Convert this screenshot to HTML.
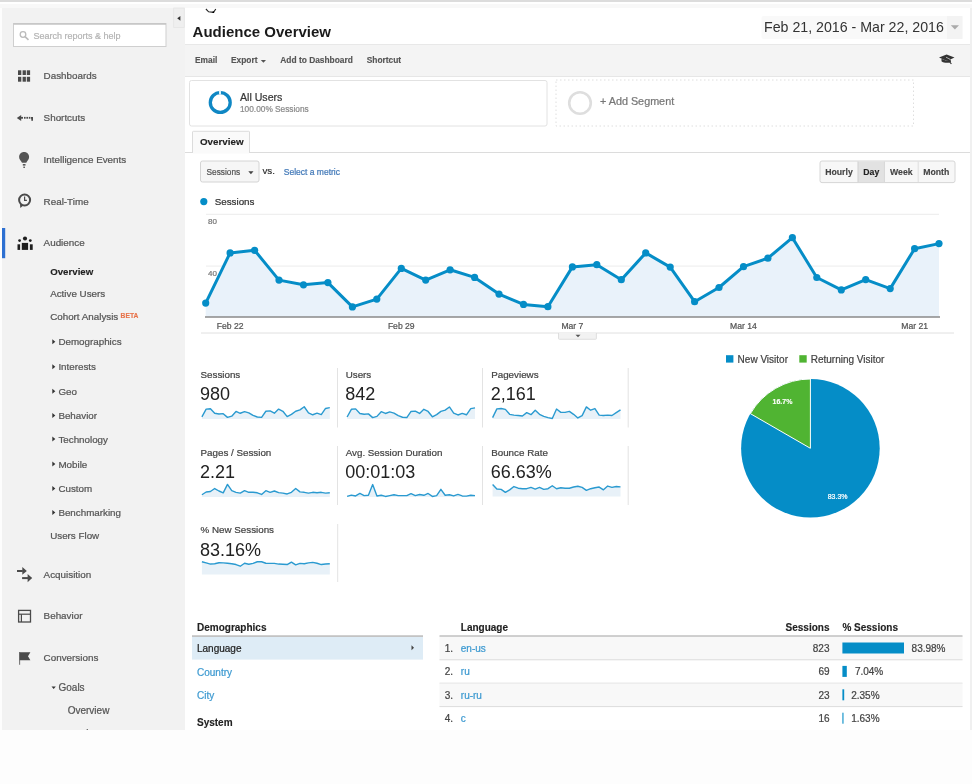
<!DOCTYPE html>
<html><head><meta charset="utf-8"><title>Audience Overview</title>
<style>
html,body{margin:0;padding:0;background:#fdfdfd;overflow:hidden;}
svg{display:block;filter:blur(0.35px);font-family:"Liberation Sans",sans-serif;}
</style></head><body>
<svg width="972" height="784" viewBox="0 0 972 784">
<rect x="0" y="0" width="972" height="784" fill="#fdfdfd" />
<rect x="0" y="0" width="972" height="2" fill="#dcdcdc" />
<rect x="0" y="2" width="972" height="2" fill="#ffffff" />
<rect x="0" y="4" width="972" height="4" fill="#f8f8f8" />
<rect x="2" y="8" width="183" height="722" fill="#f2f2f2" />
<rect x="185" y="8" width="785" height="722" fill="#ffffff" />
<rect x="970" y="8" width="2" height="722" fill="#f0f0f0" />
<rect x="185" y="44.5" width="785" height="32.5" fill="#f4f4f4" />
<line x1="185" y1="44.5" x2="970" y2="44.5" stroke="#e8e8e8" stroke-width="1" />
<line x1="185" y1="76.5" x2="970" y2="76.5" stroke="#e6e6e6" stroke-width="1" />
<rect x="13.5" y="23.5" width="152.5" height="23" fill="#fff" stroke="#cfcfcf" stroke-width="1"/>
<line x1="13.5" y1="24" x2="166" y2="24" stroke="#c4c4c4" stroke-width="1.5" />
<circle cx="23" cy="34.5" r="2.8" fill="none" stroke="#bbb" stroke-width="1.3"/>
<line x1="25" y1="36.6" x2="28.5" y2="39.8" stroke="#bbb" stroke-width="1.6" />
<text x="33.5" y="38.6" font-size="9" font-weight="400" fill="#b4b4b4" text-anchor="start"  stroke="#b4b4b4" stroke-width="0.22">Search reports &amp; help</text>
<rect x="173.7" y="8" width="10.5" height="19.5" fill="#efefef" stroke="#e4e4e4" stroke-width="0.8"/>
<path d="M180.4,16 L177.2,18.35 L180.4,20.7 Z" fill="#333"/>
<text x="43.6" y="79" font-size="9.85" font-weight="400" fill="#555" text-anchor="start"  stroke="#555" stroke-width="0.22">Dashboards</text>
<text x="43.6" y="121" font-size="9.85" font-weight="400" fill="#555" text-anchor="start"  stroke="#555" stroke-width="0.22">Shortcuts</text>
<text x="43.6" y="163" font-size="9.85" font-weight="400" fill="#555" text-anchor="start"  stroke="#555" stroke-width="0.22">Intelligence Events</text>
<text x="43.6" y="204.6" font-size="9.85" font-weight="400" fill="#555" text-anchor="start"  stroke="#555" stroke-width="0.22">Real-Time</text>
<text x="43.6" y="246.4" font-size="9.85" font-weight="400" fill="#555" text-anchor="start"  stroke="#555" stroke-width="0.22">Audience</text>
<rect x="2" y="228" width="3.2" height="30.2" fill="#2d70d2" />
<text x="50.2" y="274.5" font-size="9.7" font-weight="700" fill="#222" text-anchor="start"  stroke="#222" stroke-width="0.132">Overview</text>
<text x="50.2" y="296.8" font-size="9.8" font-weight="400" fill="#555" text-anchor="start"  stroke="#555" stroke-width="0.22">Active Users</text>
<text x="50.2" y="319.9" font-size="9.8" font-weight="400" fill="#555" text-anchor="start"  stroke="#555" stroke-width="0.22">Cohort Analysis</text>
<text x="120.6" y="317.8" font-size="6.7" font-weight="700" fill="#e8734a" text-anchor="start"  stroke="#e8734a" stroke-width="0.132">BETA</text>
<text x="58.4" y="345.2" font-size="9.8" font-weight="400" fill="#555" text-anchor="start"  stroke="#555" stroke-width="0.22">Demographics</text>
<path d="M52.3,339.3 L55.3,341.8 L52.3,344.3 Z" fill="#333"/>
<text x="58.4" y="370.2" font-size="9.8" font-weight="400" fill="#555" text-anchor="start"  stroke="#555" stroke-width="0.22">Interests</text>
<path d="M52.3,364.3 L55.3,366.8 L52.3,369.3 Z" fill="#333"/>
<text x="58.4" y="394.6" font-size="9.8" font-weight="400" fill="#555" text-anchor="start"  stroke="#555" stroke-width="0.22">Geo</text>
<path d="M52.3,388.70000000000005 L55.3,391.20000000000005 L52.3,393.70000000000005 Z" fill="#333"/>
<text x="58.4" y="418.9" font-size="9.8" font-weight="400" fill="#555" text-anchor="start"  stroke="#555" stroke-width="0.22">Behavior</text>
<path d="M52.3,413.0 L55.3,415.5 L52.3,418.0 Z" fill="#333"/>
<text x="58.4" y="442.5" font-size="9.8" font-weight="400" fill="#555" text-anchor="start"  stroke="#555" stroke-width="0.22">Technology</text>
<path d="M52.3,436.6 L55.3,439.1 L52.3,441.6 Z" fill="#333"/>
<text x="58.4" y="467.5" font-size="9.8" font-weight="400" fill="#555" text-anchor="start"  stroke="#555" stroke-width="0.22">Mobile</text>
<path d="M52.3,461.6 L55.3,464.1 L52.3,466.6 Z" fill="#333"/>
<text x="58.4" y="491.8" font-size="9.8" font-weight="400" fill="#555" text-anchor="start"  stroke="#555" stroke-width="0.22">Custom</text>
<path d="M52.3,485.90000000000003 L55.3,488.40000000000003 L52.3,490.90000000000003 Z" fill="#333"/>
<text x="58.4" y="516" font-size="9.8" font-weight="400" fill="#555" text-anchor="start"  stroke="#555" stroke-width="0.22">Benchmarking</text>
<path d="M52.3,510.1 L55.3,512.6 L52.3,515.1 Z" fill="#333"/>
<text x="50.2" y="538.9" font-size="9.8" font-weight="400" fill="#555" text-anchor="start"  stroke="#555" stroke-width="0.22">Users Flow</text>
<text x="43.6" y="577.5" font-size="9.85" font-weight="400" fill="#555" text-anchor="start"  stroke="#555" stroke-width="0.22">Acquisition</text>
<text x="43.6" y="619.3" font-size="9.85" font-weight="400" fill="#555" text-anchor="start"  stroke="#555" stroke-width="0.22">Behavior</text>
<text x="43.6" y="661.3" font-size="9.85" font-weight="400" fill="#555" text-anchor="start"  stroke="#555" stroke-width="0.22">Conversions</text>
<text x="58.5" y="690.7" font-size="10" font-weight="400" fill="#555" text-anchor="start"  stroke="#555" stroke-width="0.22">Goals</text>
<path d="M51.5,686.5 L55.8,686.5 L53.65,689 Z" fill="#333"/>
<text x="67.7" y="713.6" font-size="10" font-weight="400" fill="#555" text-anchor="start"  stroke="#555" stroke-width="0.22">Overview</text>
<text x="67.7" y="735.6" font-size="9.8" font-weight="400" fill="#555" text-anchor="start"  stroke="#555" stroke-width="0.22">Goal URLs</text>
<rect x="18" y="70.3" width="3.3" height="4.7" fill="#4a4a4a" />
<rect x="22.6" y="70.3" width="3.3" height="4.7" fill="#4a4a4a" />
<rect x="26.8" y="70.3" width="3.3" height="4.7" fill="#4a4a4a" />
<rect x="18" y="76.8" width="3.3" height="4.9" fill="#4a4a4a" />
<rect x="22.6" y="76.8" width="3.3" height="4.9" fill="#4a4a4a" />
<rect x="26.8" y="76.8" width="3.3" height="4.9" fill="#4a4a4a" />
<path d="M16.8,118 L21.2,115.1 L21.2,120.9 Z" fill="#4a4a4a"/>
<rect x="20.5" y="116.9" width="2.5" height="1.8" fill="#4a4a4a" />
<rect x="24" y="116.9" width="1.6" height="1.8" fill="#4a4a4a" />
<rect x="26.4" y="116.9" width="1.6" height="1.8" fill="#4a4a4a" />
<rect x="28.8" y="116.9" width="1.6" height="1.8" fill="#4a4a4a" />
<path d="M31,116.9 L33,116.9 L33,120.8 L31.3,120.8 L31.3,118.7 L31,118.7 Z" fill="#4a4a4a"/>
<path d="M24.1,152.1 C21,152.1 19.1,154.3 19.1,157 C19.1,159.5 20.9,160.8 22,162.7 L26.3,162.7 C27.3,160.8 29.1,159.5 29.1,157 C29.1,154.3 27.1,152.1 24.1,152.1 Z" fill="#555"/>
<rect x="22.8" y="164" width="2.7" height="1.6" fill="#555" />
<rect x="23.3" y="166.6" width="1.7" height="1.3" fill="#555" />
<circle cx="24.6" cy="200" r="5.5" fill="none" stroke="#4a4a4a" stroke-width="2"/>
<path d="M24.6,196.6 L24.6,200.3 L26.9,200.3" fill="none" stroke="#4a4a4a" stroke-width="1.2"/>
<path d="M20,204 L20.3,208 L23.3,205.6 Z" fill="#4a4a4a"/>
<circle cx="25" cy="238.5" r="2.05" fill="#1f1f1f"/>
<circle cx="19.6" cy="240.6" r="1.4" fill="#1f1f1f"/>
<circle cx="30.3" cy="240.6" r="1.4" fill="#1f1f1f"/>
<rect x="21.8" y="242.9" width="6.3" height="7" fill="#1f1f1f" />
<rect x="17.5" y="244.3" width="2.6" height="5.6" fill="#1f1f1f" />
<rect x="29.9" y="244.3" width="2.8" height="5.6" fill="#1f1f1f" />
<rect x="17" y="570" width="5.8" height="2" fill="#4a4a4a" />
<path d="M22.3,567 L26.8,571 L22.3,574.8 Z" fill="#4a4a4a"/>
<rect x="22.1" y="577.1" width="6" height="2" fill="#4a4a4a" />
<path d="M27.6,573.9 L32.2,578.1 L27.6,582.2 Z" fill="#4a4a4a"/>
<rect x="18.6" y="610.4" width="11.9" height="11.6" fill="none" stroke="#4a4a4a" stroke-width="1.3"/>
<line x1="18.6" y1="614.2" x2="30.5" y2="614.2" stroke="#4a4a4a" stroke-width="1.2" />
<line x1="21.4" y1="614.2" x2="21.4" y2="622" stroke="#4a4a4a" stroke-width="1.2" />
<line x1="19.6" y1="652" x2="19.6" y2="664.8" stroke="#777" stroke-width="1.1" />
<path d="M19.6,652.3 L30.4,652.3 L28,656.3 L30.4,660.3 L19.6,660.3 Z" fill="#4a4a4a"/>
<path d="M205.9,9 L208.6,11.8 L213.5,12.3 L215.8,9" fill="none" stroke="#222" stroke-width="1.1"/>
<circle cx="213.3" cy="12.2" r="0.9" fill="#000"/>
<text x="192.6" y="36.5" font-size="15" font-weight="700" fill="#1a1a1a" text-anchor="start" >Audience Overview</text>
<rect x="761.5" y="16" width="201" height="23" rx="2" fill="#f9f9f9"/>
<rect x="947" y="16" width="15.5" height="23" fill="#f3f3f3" />
<text x="764" y="32" font-size="14.2" font-weight="400" fill="#333" text-anchor="start" >Feb 21, 2016 - Mar 22, 2016</text>
<path d="M950.8,25.3 L959,25.3 L954.9,29.6 Z" fill="#aaa"/>
<text x="195" y="63" font-size="8.4" font-weight="700" fill="#555" text-anchor="start"  stroke="#555" stroke-width="0.132">Email</text>
<text x="231" y="63" font-size="8.4" font-weight="700" fill="#555" text-anchor="start"  stroke="#555" stroke-width="0.132">Export</text>
<path d="M260.8,60 L266,60 L263.4,62.8 Z" fill="#555"/>
<text x="280.3" y="63" font-size="8.4" font-weight="700" fill="#555" text-anchor="start"  stroke="#555" stroke-width="0.132">Add to Dashboard</text>
<text x="366.7" y="63" font-size="8.4" font-weight="700" fill="#555" text-anchor="start"  stroke="#555" stroke-width="0.132">Shortcut</text>
<path d="M939,57.6 L946.6,54.5 L954.5,57.6 L947,61 Z" fill="#333"/><path d="M941.5,58.8 L941.5,61.2 C943,62.8 949.5,63.5 951,61.8 L950.5,59.3 L947,61 Z" fill="#333"/><line x1="946" y1="57.2" x2="950.3" y2="59.4" stroke="#ccc" stroke-width="0.8"/><line x1="947.3" y1="59.4" x2="951.4" y2="63.8" stroke="#333" stroke-width="1.1"/>
<rect x="189.5" y="80.5" width="357.5" height="45.5" rx="2" fill="#fff" stroke="#e2e2e2" stroke-width="1"/>
<circle cx="220.25" cy="102.5" r="9.95" fill="none" stroke="#0f87c4" stroke-width="3.3"/>
<rect x="219" y="90.5" width="2" height="4" fill="#d8f0fb" />
<text x="240" y="101.1" font-size="10.6" font-weight="400" fill="#383838" text-anchor="start"  stroke="#383838" stroke-width="0.22">All Users</text>
<text x="240" y="112.3" font-size="8.3" font-weight="400" fill="#8a8a8a" text-anchor="start"  stroke="#8a8a8a" stroke-width="0.22">100.00% Sessions</text>
<rect x="556" y="80" width="357.5" height="46" fill="none" stroke="#dedede" stroke-width="1" stroke-dasharray="1.5,2.5"/>
<circle cx="580" cy="103" r="10.8" fill="none" stroke="#dedede" stroke-width="2.6"/>
<text x="600" y="105" font-size="10.8" font-weight="400" fill="#777" text-anchor="start"  stroke="#777" stroke-width="0.22">+ Add Segment</text>
<line x1="185" y1="152.5" x2="970" y2="152.5" stroke="#dcdcdc" stroke-width="1" />
<path d="M192.5,153 L192.5,132 Q192.5,131.3 193.5,131.3 L248.7,131.3 Q249.5,131.3 249.5,132 L249.5,153" fill="#fafafa" stroke="#dcdcdc" stroke-width="1"/>
<rect x="193" y="152" width="56" height="1.5" fill="#fafafa" />
<text x="200" y="145" font-size="9.8" font-weight="700" fill="#222" text-anchor="start"  stroke="#222" stroke-width="0.132">Overview</text>
<rect x="200.5" y="161" width="58.5" height="21" rx="2" fill="#f6f6f6" stroke="#d4d4d4" stroke-width="1"/>
<text x="206.5" y="174.7" font-size="8.3" font-weight="400" fill="#555" text-anchor="start"  stroke="#555" stroke-width="0.22">Sessions</text>
<path d="M248.3,171.3 L253.5,171.3 L250.9,174.2 Z" fill="#444"/>
<text x="262.4" y="173.6" font-size="9.8" font-weight="400" fill="#2a2a2a" text-anchor="start" stroke="#2a2a2a" stroke-width="0.15">vs.</text>
<text x="283.8" y="174.7" font-size="8.5" font-weight="400" fill="#4279b8" text-anchor="start"  stroke="#4279b8" stroke-width="0.22">Select a metric</text>
<rect x="820" y="161" width="135" height="21.6" rx="2" fill="#f7f7f7" stroke="#d6d6d6" stroke-width="1"/>
<rect x="858" y="161.5" width="26.4" height="20.6" fill="#e2e2e2" />
<line x1="858" y1="161.5" x2="858" y2="182.1" stroke="#cfcfcf" stroke-width="1" />
<line x1="884.4" y1="161.5" x2="884.4" y2="182.1" stroke="#d6d6d6" stroke-width="1" />
<line x1="918.2" y1="161.5" x2="918.2" y2="182.1" stroke="#dedede" stroke-width="1" />
<text x="839" y="174.5" font-size="8.7" font-weight="700" fill="#444" text-anchor="middle"  stroke="#444" stroke-width="0.132">Hourly</text>
<text x="871.3" y="174.5" font-size="8.7" font-weight="700" fill="#222" text-anchor="middle"  stroke="#222" stroke-width="0.132">Day</text>
<text x="901.3" y="174.5" font-size="8.7" font-weight="700" fill="#444" text-anchor="middle"  stroke="#444" stroke-width="0.132">Week</text>
<text x="936.3" y="174.5" font-size="8.7" font-weight="700" fill="#444" text-anchor="middle"  stroke="#444" stroke-width="0.132">Month</text>
<circle cx="203.8" cy="201.6" r="3.6" fill="#058dc7"/>
<text x="214.7" y="205.2" font-size="9.8" font-weight="400" fill="#333" text-anchor="start"  stroke="#333" stroke-width="0.22">Sessions</text>
<line x1="206" y1="214.3" x2="939" y2="214.3" stroke="#ececec" stroke-width="1" />
<line x1="206" y1="266.1" x2="939" y2="266.1" stroke="#ececec" stroke-width="1" />
<text x="208" y="223.8" font-size="8" font-weight="400" fill="#777" text-anchor="start"  stroke="#777" stroke-width="0.22">80</text>
<text x="208" y="276" font-size="8" font-weight="400" fill="#777" text-anchor="start"  stroke="#777" stroke-width="0.22">40</text>
<path d="M205.7,317 L205.7,303.1 L230.1,252.9 L254.6,250.3 L279.0,280.1 L303.5,284.8 L327.9,282.6 L352.4,306.9 L376.8,299.1 L401.3,268.4 L425.7,280.1 L450.1,269.8 L474.6,277.4 L499.0,294.1 L523.5,304.4 L547.9,306.7 L572.4,266.9 L596.8,264.7 L621.3,279.7 L645.7,252.9 L670.2,267.1 L694.6,301.7 L719.0,287.5 L743.5,266.7 L767.9,258.2 L792.4,237.7 L816.8,277.5 L841.3,289.9 L865.7,279.6 L890.2,288.6 L914.6,248.7 L939.0,243.6 L939.0,317 Z" fill="#e9f2fa"/>
<line x1="205" y1="317.1" x2="940" y2="317.1" stroke="#8a8a8a" stroke-width="1.5" />
<polyline points="205.7,303.1 230.1,252.9 254.6,250.3 279.0,280.1 303.5,284.8 327.9,282.6 352.4,306.9 376.8,299.1 401.3,268.4 425.7,280.1 450.1,269.8 474.6,277.4 499.0,294.1 523.5,304.4 547.9,306.7 572.4,266.9 596.8,264.7 621.3,279.7 645.7,252.9 670.2,267.1 694.6,301.7 719.0,287.5 743.5,266.7 767.9,258.2 792.4,237.7 816.8,277.5 841.3,289.9 865.7,279.6 890.2,288.6 914.6,248.7 939.0,243.6" fill="none" stroke="#058dc7" stroke-width="3" stroke-linejoin="round"/>
<circle cx="205.7" cy="303.1" r="3.6" fill="#058dc7"/>
<circle cx="230.1" cy="252.9" r="3.6" fill="#058dc7"/>
<circle cx="254.6" cy="250.3" r="3.6" fill="#058dc7"/>
<circle cx="279.0" cy="280.1" r="3.6" fill="#058dc7"/>
<circle cx="303.5" cy="284.8" r="3.6" fill="#058dc7"/>
<circle cx="327.9" cy="282.6" r="3.6" fill="#058dc7"/>
<circle cx="352.4" cy="306.9" r="3.6" fill="#058dc7"/>
<circle cx="376.8" cy="299.1" r="3.6" fill="#058dc7"/>
<circle cx="401.3" cy="268.4" r="3.6" fill="#058dc7"/>
<circle cx="425.7" cy="280.1" r="3.6" fill="#058dc7"/>
<circle cx="450.1" cy="269.8" r="3.6" fill="#058dc7"/>
<circle cx="474.6" cy="277.4" r="3.6" fill="#058dc7"/>
<circle cx="499.0" cy="294.1" r="3.6" fill="#058dc7"/>
<circle cx="523.5" cy="304.4" r="3.6" fill="#058dc7"/>
<circle cx="547.9" cy="306.7" r="3.6" fill="#058dc7"/>
<circle cx="572.4" cy="266.9" r="3.6" fill="#058dc7"/>
<circle cx="596.8" cy="264.7" r="3.6" fill="#058dc7"/>
<circle cx="621.3" cy="279.7" r="3.6" fill="#058dc7"/>
<circle cx="645.7" cy="252.9" r="3.6" fill="#058dc7"/>
<circle cx="670.2" cy="267.1" r="3.6" fill="#058dc7"/>
<circle cx="694.6" cy="301.7" r="3.6" fill="#058dc7"/>
<circle cx="719.0" cy="287.5" r="3.6" fill="#058dc7"/>
<circle cx="743.5" cy="266.7" r="3.6" fill="#058dc7"/>
<circle cx="767.9" cy="258.2" r="3.6" fill="#058dc7"/>
<circle cx="792.4" cy="237.7" r="3.6" fill="#058dc7"/>
<circle cx="816.8" cy="277.5" r="3.6" fill="#058dc7"/>
<circle cx="841.3" cy="289.9" r="3.6" fill="#058dc7"/>
<circle cx="865.7" cy="279.6" r="3.6" fill="#058dc7"/>
<circle cx="890.2" cy="288.6" r="3.6" fill="#058dc7"/>
<circle cx="914.6" cy="248.7" r="3.6" fill="#058dc7"/>
<circle cx="939.0" cy="243.6" r="3.6" fill="#058dc7"/>
<text x="230.14499999999998" y="328.5" font-size="8.6" font-weight="400" fill="#555" text-anchor="middle"  stroke="#555" stroke-width="0.22">Feb 22</text>
<text x="401.26" y="328.5" font-size="8.6" font-weight="400" fill="#555" text-anchor="middle"  stroke="#555" stroke-width="0.22">Feb 29</text>
<text x="572.375" y="328.5" font-size="8.6" font-weight="400" fill="#555" text-anchor="middle"  stroke="#555" stroke-width="0.22">Mar 7</text>
<text x="743.49" y="328.5" font-size="8.6" font-weight="400" fill="#555" text-anchor="middle"  stroke="#555" stroke-width="0.22">Mar 14</text>
<text x="914.605" y="328.5" font-size="8.6" font-weight="400" fill="#555" text-anchor="middle"  stroke="#555" stroke-width="0.22">Mar 21</text>
<line x1="201" y1="333" x2="954" y2="333" stroke="#e0e0e0" stroke-width="1" />
<path d="M558.5,333 L558.5,338.5 Q558.5,339.3 559.5,339.3 L595.5,339.3 Q596.4,339.3 596.4,338.5 L596.4,333" fill="#f2f2f2" stroke="#d8d8d8" stroke-width="0.8"/>
<path d="M575.5,334.8 L580.5,334.8 L578,337.3 Z" fill="#555"/>
<text x="200.5" y="377.8" font-size="9.8" font-weight="400" fill="#444" text-anchor="start"  stroke="#444" stroke-width="0.22">Sessions</text>
<text x="200.0" y="400.3" font-size="18" font-weight="400" fill="#222" text-anchor="start" >980</text>
<path d="M201.90,419 L201.90,416.82 L206.16,409.09 L210.43,408.69 L214.69,413.28 L218.95,414.00 L223.22,413.66 L227.48,417.40 L231.74,416.20 L236.01,411.48 L240.27,413.28 L244.53,411.69 L248.80,412.86 L253.06,415.43 L257.32,417.02 L261.59,417.37 L265.85,411.25 L270.11,410.91 L274.38,413.22 L278.64,409.09 L282.90,411.28 L287.17,416.60 L291.43,414.42 L295.69,411.22 L299.96,409.91 L304.22,406.75 L308.48,412.88 L312.75,414.78 L317.01,413.20 L321.27,414.58 L325.54,408.45 L329.80,407.66 L329.80,419 Z" fill="#e8f1f8"/>
<polyline points="201.90,416.82 206.16,409.09 210.43,408.69 214.69,413.28 218.95,414.00 223.22,413.66 227.48,417.40 231.74,416.20 236.01,411.48 240.27,413.28 244.53,411.69 248.80,412.86 253.06,415.43 257.32,417.02 261.59,417.37 265.85,411.25 270.11,410.91 274.38,413.22 278.64,409.09 282.90,411.28 287.17,416.60 291.43,414.42 295.69,411.22 299.96,409.91 304.22,406.75 308.48,412.88 312.75,414.78 317.01,413.20 321.27,414.58 325.54,408.45 329.80,407.66" fill="none" stroke="#2a9ad0" stroke-width="1.4" stroke-linejoin="round"/>
<text x="345.7" y="377.8" font-size="9.8" font-weight="400" fill="#444" text-anchor="start"  stroke="#444" stroke-width="0.22">Users</text>
<text x="345.2" y="400.3" font-size="18" font-weight="400" fill="#222" text-anchor="start" >842</text>
<path d="M347.10,419 L347.10,417.02 L351.36,409.29 L355.63,408.89 L359.89,413.48 L364.15,414.20 L368.42,413.86 L372.68,417.60 L376.94,416.40 L381.21,411.68 L385.47,413.48 L389.73,411.89 L394.00,413.06 L398.26,415.63 L402.52,417.22 L406.79,417.57 L411.05,411.45 L415.31,411.11 L419.58,413.42 L423.84,409.29 L428.10,411.48 L432.37,416.80 L436.63,414.62 L440.89,411.42 L445.16,410.11 L449.42,406.95 L453.68,413.08 L457.95,414.98 L462.21,413.40 L466.47,414.78 L470.74,408.65 L475.00,407.86 L475.00,419 Z" fill="#e8f1f8"/>
<polyline points="347.10,417.02 351.36,409.29 355.63,408.89 359.89,413.48 364.15,414.20 368.42,413.86 372.68,417.60 376.94,416.40 381.21,411.68 385.47,413.48 389.73,411.89 394.00,413.06 398.26,415.63 402.52,417.22 406.79,417.57 411.05,411.45 415.31,411.11 419.58,413.42 423.84,409.29 428.10,411.48 432.37,416.80 436.63,414.62 440.89,411.42 445.16,410.11 449.42,406.95 453.68,413.08 457.95,414.98 462.21,413.40 466.47,414.78 470.74,408.65 475.00,407.86" fill="none" stroke="#2a9ad0" stroke-width="1.4" stroke-linejoin="round"/>
<text x="491.2" y="377.8" font-size="9.8" font-weight="400" fill="#444" text-anchor="start"  stroke="#444" stroke-width="0.22">Pageviews</text>
<text x="490.7" y="400.3" font-size="18" font-weight="400" fill="#222" text-anchor="start" >2,161</text>
<path d="M492.60,419 L492.60,417.61 L496.86,408.89 L501.13,408.56 L505.39,409.38 L509.65,414.32 L513.92,415.14 L518.18,415.47 L522.44,415.97 L526.71,412.67 L530.97,414.65 L535.23,410.21 L539.50,414.32 L543.76,416.30 L548.02,417.61 L552.29,418.44 L556.55,409.05 L560.81,412.35 L565.08,412.35 L569.34,411.36 L573.60,414.32 L577.87,417.94 L582.13,415.64 L586.39,406.91 L590.66,410.21 L594.92,408.56 L599.18,415.14 L603.45,415.47 L607.71,415.14 L611.97,415.47 L616.24,412.67 L620.50,409.88 L620.50,419 Z" fill="#e8f1f8"/>
<polyline points="492.60,417.61 496.86,408.89 501.13,408.56 505.39,409.38 509.65,414.32 513.92,415.14 518.18,415.47 522.44,415.97 526.71,412.67 530.97,414.65 535.23,410.21 539.50,414.32 543.76,416.30 548.02,417.61 552.29,418.44 556.55,409.05 560.81,412.35 565.08,412.35 569.34,411.36 573.60,414.32 577.87,417.94 582.13,415.64 586.39,406.91 590.66,410.21 594.92,408.56 599.18,415.14 603.45,415.47 607.71,415.14 611.97,415.47 616.24,412.67 620.50,409.88" fill="none" stroke="#2a9ad0" stroke-width="1.4" stroke-linejoin="round"/>
<text x="200.5" y="455.6" font-size="9.8" font-weight="400" fill="#444" text-anchor="start"  stroke="#444" stroke-width="0.22">Pages / Session</text>
<text x="200.0" y="478.1" font-size="18" font-weight="400" fill="#222" text-anchor="start" >2.21</text>
<path d="M201.90,497 L201.90,494.79 L206.16,491.99 L210.43,491.50 L214.69,488.53 L218.95,491.00 L223.22,492.81 L227.48,484.42 L231.74,490.67 L236.01,492.32 L240.27,493.14 L244.53,490.67 L248.80,492.32 L253.06,492.32 L257.32,492.81 L261.59,494.46 L265.85,490.67 L270.11,492.32 L274.38,491.00 L278.64,492.65 L282.90,493.14 L287.17,493.97 L291.43,492.32 L295.69,488.53 L299.96,491.83 L304.22,492.32 L308.48,493.14 L312.75,492.32 L317.01,492.81 L321.27,492.32 L325.54,493.14 L329.80,492.81 L329.80,497 Z" fill="#e8f1f8"/>
<polyline points="201.90,494.79 206.16,491.99 210.43,491.50 214.69,488.53 218.95,491.00 223.22,492.81 227.48,484.42 231.74,490.67 236.01,492.32 240.27,493.14 244.53,490.67 248.80,492.32 253.06,492.32 257.32,492.81 261.59,494.46 265.85,490.67 270.11,492.32 274.38,491.00 278.64,492.65 282.90,493.14 287.17,493.97 291.43,492.32 295.69,488.53 299.96,491.83 304.22,492.32 308.48,493.14 312.75,492.32 317.01,492.81 321.27,492.32 325.54,493.14 329.80,492.81" fill="none" stroke="#2a9ad0" stroke-width="1.4" stroke-linejoin="round"/>
<text x="345.7" y="455.6" font-size="9.8" font-weight="400" fill="#444" text-anchor="start"  stroke="#444" stroke-width="0.22">Avg. Session Duration</text>
<text x="345.2" y="478.1" font-size="18" font-weight="400" fill="#222" text-anchor="start" >00:01:03</text>
<path d="M347.10,497 L347.10,496.44 L351.36,495.12 L355.63,495.94 L359.89,493.47 L364.15,495.61 L368.42,495.28 L372.68,484.58 L376.94,495.94 L381.21,495.28 L385.47,496.44 L389.73,495.61 L394.00,494.79 L398.26,495.61 L402.52,495.61 L406.79,495.61 L411.05,493.64 L415.31,495.61 L419.58,494.46 L423.84,495.28 L428.10,493.47 L432.37,496.44 L436.63,495.61 L440.89,489.36 L445.16,495.28 L449.42,494.79 L453.68,495.94 L457.95,494.46 L462.21,495.94 L466.47,496.11 L470.74,495.28 L475.00,495.61 L475.00,497 Z" fill="#e8f1f8"/>
<polyline points="347.10,496.44 351.36,495.12 355.63,495.94 359.89,493.47 364.15,495.61 368.42,495.28 372.68,484.58 376.94,495.94 381.21,495.28 385.47,496.44 389.73,495.61 394.00,494.79 398.26,495.61 402.52,495.61 406.79,495.61 411.05,493.64 415.31,495.61 419.58,494.46 423.84,495.28 428.10,493.47 432.37,496.44 436.63,495.61 440.89,489.36 445.16,495.28 449.42,494.79 453.68,495.94 457.95,494.46 462.21,495.94 466.47,496.11 470.74,495.28 475.00,495.61" fill="none" stroke="#2a9ad0" stroke-width="1.4" stroke-linejoin="round"/>
<text x="491.2" y="455.6" font-size="9.8" font-weight="400" fill="#444" text-anchor="start"  stroke="#444" stroke-width="0.22">Bounce Rate</text>
<text x="490.7" y="478.1" font-size="18" font-weight="400" fill="#222" text-anchor="start" >66.63%</text>
<path d="M492.60,496.5 L492.60,484.42 L496.86,489.03 L501.13,489.36 L505.39,492.32 L509.65,489.85 L513.92,486.56 L518.18,488.21 L522.44,488.70 L526.71,488.70 L530.97,487.38 L535.23,489.03 L539.50,487.38 L543.76,489.36 L548.02,488.70 L552.29,485.74 L556.55,488.70 L560.81,487.71 L565.08,488.21 L569.34,488.21 L573.60,487.05 L577.87,486.23 L582.13,487.38 L586.39,490.35 L590.66,488.70 L594.92,487.71 L599.18,487.05 L603.45,489.85 L607.71,486.07 L611.97,487.38 L616.24,486.56 L620.50,486.89 L620.50,496.5 Z" fill="#e8f1f8"/>
<polyline points="492.60,484.42 496.86,489.03 501.13,489.36 505.39,492.32 509.65,489.85 513.92,486.56 518.18,488.21 522.44,488.70 526.71,488.70 530.97,487.38 535.23,489.03 539.50,487.38 543.76,489.36 548.02,488.70 552.29,485.74 556.55,488.70 560.81,487.71 565.08,488.21 569.34,488.21 573.60,487.05 577.87,486.23 582.13,487.38 586.39,490.35 590.66,488.70 594.92,487.71 599.18,487.05 603.45,489.85 607.71,486.07 611.97,487.38 616.24,486.56 620.50,486.89" fill="none" stroke="#2a9ad0" stroke-width="1.4" stroke-linejoin="round"/>
<text x="200.5" y="533.4" font-size="9.8" font-weight="400" fill="#444" text-anchor="start"  stroke="#444" stroke-width="0.22">% New Sessions</text>
<text x="200.0" y="555.9" font-size="18" font-weight="400" fill="#222" text-anchor="start" >83.16%</text>
<path d="M201.90,574.5 L201.90,561.76 L206.16,562.91 L210.43,564.07 L214.69,563.74 L218.95,562.75 L223.22,562.91 L227.48,563.24 L231.74,563.74 L236.01,564.56 L240.27,566.21 L244.53,563.24 L248.80,564.23 L253.06,563.41 L257.32,561.76 L261.59,561.76 L265.85,563.24 L270.11,563.41 L274.38,563.41 L278.64,564.07 L282.90,564.23 L287.17,564.56 L291.43,562.09 L295.69,564.89 L299.96,563.41 L304.22,563.74 L308.48,562.91 L312.75,562.42 L317.01,563.24 L321.27,564.56 L325.54,564.07 L329.80,563.74 L329.80,574.5 Z" fill="#e8f1f8"/>
<polyline points="201.90,561.76 206.16,562.91 210.43,564.07 214.69,563.74 218.95,562.75 223.22,562.91 227.48,563.24 231.74,563.74 236.01,564.56 240.27,566.21 244.53,563.24 248.80,564.23 253.06,563.41 257.32,561.76 261.59,561.76 265.85,563.24 270.11,563.41 274.38,563.41 278.64,564.07 282.90,564.23 287.17,564.56 291.43,562.09 295.69,564.89 299.96,563.41 304.22,563.74 308.48,562.91 312.75,562.42 317.01,563.24 321.27,564.56 325.54,564.07 329.80,563.74" fill="none" stroke="#2a9ad0" stroke-width="1.4" stroke-linejoin="round"/>
<line x1="337.5" y1="368" x2="337.5" y2="427.5" stroke="#e3e3e3" stroke-width="1" />
<line x1="337.5" y1="446" x2="337.5" y2="505" stroke="#e3e3e3" stroke-width="1" />
<line x1="482.5" y1="368" x2="482.5" y2="427.5" stroke="#e3e3e3" stroke-width="1" />
<line x1="482.5" y1="446" x2="482.5" y2="505" stroke="#e3e3e3" stroke-width="1" />
<line x1="628.2" y1="368" x2="628.2" y2="427.5" stroke="#e3e3e3" stroke-width="1" />
<line x1="628.2" y1="446" x2="628.2" y2="505" stroke="#e3e3e3" stroke-width="1" />
<line x1="337.7" y1="524" x2="337.7" y2="582" stroke="#e3e3e3" stroke-width="1" />
<circle cx="810.4" cy="448.3" r="69.3" fill="#058dc7"/>
<path d="M810.4,448.3 L810.4,379.0 A69.3,69.3 0 0,0 750.38,413.65 Z" fill="#50b432" stroke="#fff" stroke-width="1"/>
<text x="782.5" y="403.8" font-size="7" font-weight="700" fill="#fff" text-anchor="middle"  stroke="#fff" stroke-width="0.132">16.7%</text>
<text x="837.6" y="499.3" font-size="7" font-weight="400" fill="#fff" text-anchor="middle"  stroke="#fff" stroke-width="0.22">83.3%</text>
<rect x="726" y="355.2" width="7.4" height="7.4" fill="#058dc7" />
<text x="737.6" y="363" font-size="10" font-weight="400" fill="#444" text-anchor="start"  stroke="#444" stroke-width="0.22">New Visitor</text>
<rect x="799.3" y="355.2" width="7.4" height="7.4" fill="#50b432" />
<text x="810.7" y="363" font-size="10" font-weight="400" fill="#444" text-anchor="start"  stroke="#444" stroke-width="0.22">Returning Visitor</text>
<text x="197" y="631.4" font-size="10" font-weight="700" fill="#222" text-anchor="start"  stroke="#222" stroke-width="0.132">Demographics</text>
<rect x="192" y="635.3" width="231" height="1.6" fill="#bdbdbd" />
<rect x="192" y="637" width="231" height="22.6" fill="#deecf6" />
<text x="197" y="651.5" font-size="10" font-weight="400" fill="#222" text-anchor="start"  stroke="#222" stroke-width="0.22">Language</text>
<path d="M411.5,645.3 L414,647.8 L411.5,650.3 Z" fill="#444"/>
<text x="197" y="675.5" font-size="10" font-weight="400" fill="#3d9ad1" text-anchor="start"  stroke="#3d9ad1" stroke-width="0.22">Country</text>
<text x="197" y="699" font-size="10" font-weight="400" fill="#3d9ad1" text-anchor="start"  stroke="#3d9ad1" stroke-width="0.22">City</text>
<text x="197" y="725.6" font-size="10" font-weight="700" fill="#222" text-anchor="start"  stroke="#222" stroke-width="0.132">System</text>
<rect x="439.5" y="635.3" width="523" height="1.6" fill="#bdbdbd" />
<text x="460.8" y="631.4" font-size="10" font-weight="700" fill="#222" text-anchor="start"  stroke="#222" stroke-width="0.132">Language</text>
<text x="829.5" y="631.4" font-size="10" font-weight="700" fill="#222" text-anchor="end"  stroke="#222" stroke-width="0.132">Sessions</text>
<text x="842.4" y="631.4" font-size="10" font-weight="700" fill="#222" text-anchor="start"  stroke="#222" stroke-width="0.132">% Sessions</text>
<rect x="439.5" y="636.8" width="523" height="23.2" fill="#f8f8f8" />
<line x1="439.5" y1="659.8" x2="962.5" y2="659.8" stroke="#dcdcdc" stroke-width="1" />
<text x="444.7" y="652.0" font-size="10" font-weight="400" fill="#444" text-anchor="start"  stroke="#444" stroke-width="0.22">1.</text>
<text x="460.8" y="652.0" font-size="10" font-weight="400" fill="#3d9ad1" text-anchor="start"  stroke="#3d9ad1" stroke-width="0.22">en-us</text>
<text x="829.5" y="652.0" font-size="10" font-weight="400" fill="#444" text-anchor="end"  stroke="#444" stroke-width="0.22">823</text>
<rect x="842.4" y="642.5" width="61.6" height="11" fill="#058dc7" />
<text x="911.6" y="652.0" font-size="10" font-weight="400" fill="#444" text-anchor="start"  stroke="#444" stroke-width="0.22">83.98%</text>
<line x1="439.5" y1="683.1999999999999" x2="962.5" y2="683.1999999999999" stroke="#dcdcdc" stroke-width="1" />
<text x="444.7" y="675.4" font-size="10" font-weight="400" fill="#444" text-anchor="start"  stroke="#444" stroke-width="0.22">2.</text>
<text x="460.8" y="675.4" font-size="10" font-weight="400" fill="#3d9ad1" text-anchor="start"  stroke="#3d9ad1" stroke-width="0.22">ru</text>
<text x="829.5" y="675.4" font-size="10" font-weight="400" fill="#444" text-anchor="end"  stroke="#444" stroke-width="0.22">69</text>
<rect x="842.4" y="665.9" width="4.4" height="11" fill="#058dc7" />
<text x="854.9" y="675.4" font-size="10" font-weight="400" fill="#444" text-anchor="start"  stroke="#444" stroke-width="0.22">7.04%</text>
<rect x="439.5" y="683.5999999999999" width="523" height="23.2" fill="#f8f8f8" />
<line x1="439.5" y1="706.5999999999999" x2="962.5" y2="706.5999999999999" stroke="#dcdcdc" stroke-width="1" />
<text x="444.7" y="698.8" font-size="10" font-weight="400" fill="#444" text-anchor="start"  stroke="#444" stroke-width="0.22">3.</text>
<text x="460.8" y="698.8" font-size="10" font-weight="400" fill="#3d9ad1" text-anchor="start"  stroke="#3d9ad1" stroke-width="0.22">ru-ru</text>
<text x="829.5" y="698.8" font-size="10" font-weight="400" fill="#444" text-anchor="end"  stroke="#444" stroke-width="0.22">23</text>
<rect x="842.4" y="689.3" width="1.8" height="11" fill="#058dc7" />
<text x="851.2" y="698.8" font-size="10" font-weight="400" fill="#444" text-anchor="start"  stroke="#444" stroke-width="0.22">2.35%</text>
<text x="444.7" y="722.2" font-size="10" font-weight="400" fill="#444" text-anchor="start"  stroke="#444" stroke-width="0.22">4.</text>
<text x="460.8" y="722.2" font-size="10" font-weight="400" fill="#3d9ad1" text-anchor="start"  stroke="#3d9ad1" stroke-width="0.22">c</text>
<text x="829.5" y="722.2" font-size="10" font-weight="400" fill="#444" text-anchor="end"  stroke="#444" stroke-width="0.22">16</text>
<rect x="842.4" y="712.7" width="1.1" height="11" fill="#058dc7" />
<text x="851.2" y="722.2" font-size="10" font-weight="400" fill="#444" text-anchor="start"  stroke="#444" stroke-width="0.22">1.63%</text>
<rect x="0" y="730" width="972" height="54" fill="#fdfdfd" />
</svg>
</body></html>
